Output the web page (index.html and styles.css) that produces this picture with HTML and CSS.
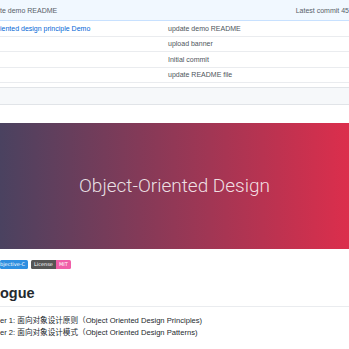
FILE: index.html
```html
<!DOCTYPE html>
<html>
<head>
    <title>Object-Oriented Design</title>
    <link rel="stylesheet" href="styles.css">
</head>
<body>
    <div class="files">
        <div class="commit-bar">
            <span>te demo README</span>
            <span class="latest">Latest commit 45</span>
        </div>
        <div class="file-row">
            <a class="file-name" href="#">iented design principle Demo</a>
            <span class="file-msg">update demo README</span>
        </div>
        <div class="file-row">
            <span class="file-name"></span>
            <span class="file-msg">upload banner</span>
        </div>
        <div class="file-row">
            <span class="file-name"></span>
            <span class="file-msg">Initial commit</span>
        </div>
        <div class="file-row">
            <span class="file-name"></span>
            <span class="file-msg">update README file</span>
        </div>
    </div>

    <div class="readme-head"></div>

    <div class="readme">
        <div class="banner">
            <span>Object-Oriented Design</span>
        </div>

        <div class="badges">
            <span class="badge"><span class="badge-value blue">bjective-C</span></span>
            <span class="badge"><span class="badge-label">License</span><span class="badge-value pink">MIT</span></span>
        </div>

        <h1>ogue</h1>

        <ul class="chapters">
            <li>er 1: 面向对象设计原则（Object Oriented Design Principles)</li>
            <li>er 2: 面向对象设计模式（Object Oriented Design Patterns)</li>
        </ul>
    </div>
</body>
</html>
```

FILE: styles.css
```css
/* GitHub repo page, zoomed out */
body {
    margin: 0;
    font-family: "Liberation Sans", Arial, "Noto Sans CJK SC", sans-serif;
    color: #24292e;
    overflow: hidden;
    background-color: #fff;
}
.commit-bar {
    display: flex;
    align-items: center;
    height: 20px;
    background-color: #f1f8ff;
    border-bottom: 1px solid #c8e1ff;
    font-size: 7px;
    color: #586069;
}
.commit-bar .latest {
    margin-left: auto;
    white-space: nowrap;
}
.file-row {
    display: grid;
    grid-template-columns: 168px 1fr;
    align-items: center;
    height: 14.5px;
    border-bottom: 1px solid #eaecef;
    font-size: 7px;
}
.file-name {
    color: #0366d6;
    text-decoration: none;
}
.file-msg {
    color: #4e555c;
}
.readme-head {
    margin-top: 4px;
    height: 16px;
    background-color: #f6f8fa;
    border-top: 1px solid #e1e4e8;
    border-bottom: 1px solid #e1e4e8;
}
.readme {
    padding-top: 18px;
}
.banner {
    display: flex;
    align-items: center;
    justify-content: center;
    height: 126px;
    background: linear-gradient(to right, #4a4260, #923856 50%, #dc2e4c);
    color: rgba(255, 255, 255, 0.85);
    font-family: Roboto, "Liberation Sans", sans-serif;
    font-weight: 300;
    font-size: 19px;
    padding-bottom: 2px;
    box-sizing: border-box;
}
.badges {
    display: flex;
    gap: 3px;
    margin-top: 11px;
    height: 9px;
}
.badge {
    display: flex;
    border-radius: 1.5px;
    overflow: hidden;
    font-family: "DejaVu Sans", Verdana, sans-serif;
    font-size: 5px;
    line-height: 9px;
    color: #fff;
}
.badge-label {
    background-color: #555;
    padding: 0 3px;
}
.badge-value {
    padding: 0 3px;
}
.badge-value.blue {
    background-color: #2f8fe0;
    padding-left: 0;
}
.badge-value.pink {
    background-color: #f05fa8;
}
h1 {
    margin: 15px 0 8px;
    padding-bottom: 3px;
    font-size: 14.5px;
    line-height: 19px;
    border-bottom: 1px solid #eaecef;
}
.chapters {
    list-style: none;
    margin: 0;
    padding: 0;
    font-size: 7.6px;
    line-height: 12px;
}
```
